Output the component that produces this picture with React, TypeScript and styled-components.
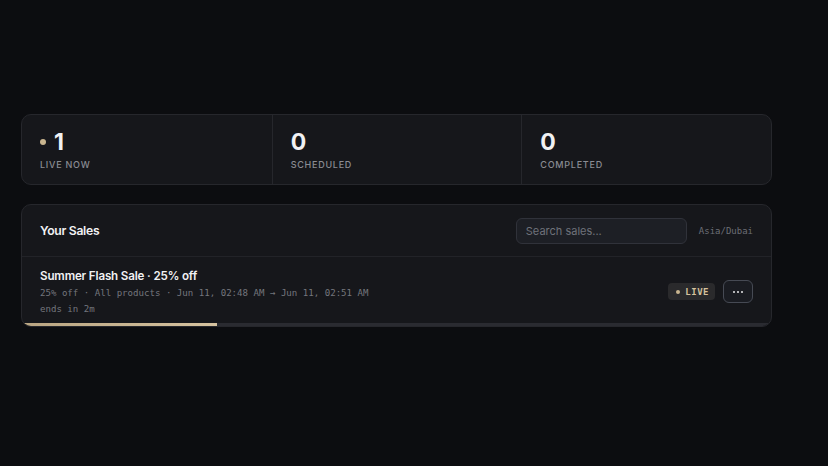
import styled, { createGlobalStyle } from "styled-components";

const Global = createGlobalStyle`
    html, body {
        margin: 0;
        padding: 0;
        background-color: #0c0d10;
    }
    * {
        box-sizing: border-box;
    }
`;

const Page = styled.div`
    min-height: 466px;
    padding: 114px 56px 40px 21px;
    display: flex;
    flex-direction: column;
    gap: 19px;
    font-family: Inter, "Noto Sans", sans-serif;
    color: #f1f1f3;
`;

const Card = styled.div`
    background-color: #16171b;
    border: 1px solid #26272c;
    border-radius: 10px;
    overflow: hidden;
`;

const Stats = styled(Card)`
    display: grid;
    grid-template-columns: repeat(3, 1fr);
    height: 71px;
`;

const Stat = styled.div`
    padding: 13px 18px 0;
    display: flex;
    flex-direction: column;
    gap: 3px;
    & + & {
        border-left: 1px solid #26272c;
    }
`;

const Value = styled.div`
    display: flex;
    align-items: center;
    gap: 8px;
    font-size: 23px;
    font-weight: 700;
    line-height: 28px;
`;

const Dot = styled.span<{ $size: number }>`
    width: ${(p) => p.$size}px;
    height: ${(p) => p.$size}px;
    border-radius: 50%;
    background-color: #c9b58f;
`;

const Label = styled.div`
    font-size: 9px;
    font-weight: 500;
    letter-spacing: 0.75px;
    color: #8a8c93;
    text-transform: uppercase;
`;

const Header = styled.div`
    height: 52px;
    padding: 0 18px;
    display: flex;
    align-items: center;
    gap: 12px;
    border-bottom: 1px solid #222328;
`;

const Title = styled.h2`
    margin: 0;
    flex: 1;
    font-size: 12.2px;
    font-weight: 600;
    letter-spacing: -0.3px;
`;

const Search = styled.input`
    width: 171px;
    height: 26px;
    padding: 0 9px;
    border-radius: 6px;
    border: 1px solid #30323a;
    background-color: #1d1f25;
    color: #ddd;
    font-family: Inter, sans-serif;
    font-size: 11px;
    &::placeholder {
        color: #6f727a;
    }
    &:focus {
        outline: none;
    }
`;

const Mono = styled.span`
    font-family: "DejaVu Sans Mono", "Liberation Mono", monospace;
    font-size: 9px;
    color: #6c6e75;
`;

const Row = styled.div`
    position: relative;
    height: 69px;
    padding: 12px 18px 0;
    display: flex;
    align-items: flex-start;
    gap: 8px;
`;

const Info = styled.div`
    flex: 1;
    display: flex;
    flex-direction: column;
    gap: 3px;
`;

const SaleName = styled.div`
    font-size: 11.6px;
    font-weight: 600;
    line-height: 15px;
    letter-spacing: -0.15px;
`;

const Meta = styled(Mono)`
    line-height: 13px;
    color: #74767d;
    font-size: 9.1px;
`;

const Actions = styled.div`
    display: flex;
    align-items: center;
    gap: 8px;
    margin-top: 11px;
`;

const Badge = styled.span`
    height: 17px;
    padding: 0 6px 0 8px;
    display: inline-flex;
    align-items: center;
    gap: 5px;
    border-radius: 4px;
    background-color: #2a2a2c;
    color: #d4c19d;
    font-family: "DejaVu Sans Mono", monospace;
    font-size: 9px;
    font-weight: 700;
    letter-spacing: 0.5px;
`;

const MoreButton = styled.button`
    width: 30px;
    height: 23px;
    display: flex;
    align-items: center;
    justify-content: center;
    gap: 2px;
    border-radius: 6px;
    border: 1px solid #464a54;
    background-color: #1a1c22;
    padding: 0;
    cursor: pointer;
`;

const MoreDot = styled.span`
    width: 2px;
    height: 2px;
    border-radius: 50%;
    background-color: #e6e6e8;
`;

const Track = styled.div`
    position: absolute;
    left: 0;
    right: 0;
    bottom: 0;
    height: 3px;
    background-color: #2a2b31;
`;

const Fill = styled.div`
    height: 100%;
    background: linear-gradient(90deg, #b9a582, #d6c3a0);
`;

const stats = [
    { value: 1, label: "Live now", live: true },
    { value: 0, label: "Scheduled", live: false },
    { value: 0, label: "Completed", live: false },
];

function App() {
    const progress = 26;

    return (
        <Page>
            <Global />
            <Stats>
                {stats.map((s) => (
                    <Stat key={s.label}>
                        <Value>
                            {s.live && <Dot $size={6} />}
                            {s.value}
                        </Value>
                        <Label>{s.label}</Label>
                    </Stat>
                ))}
            </Stats>
            <Card>
                <Header>
                    <Title>Your Sales</Title>
                    <Search placeholder={"Search sales..."} />
                    <Mono>Asia/Dubai</Mono>
                </Header>
                <Row>
                    <Info>
                        <SaleName>Summer Flash Sale · 25% off</SaleName>
                        <Meta>25% off · All products · Jun 11, 02:48 AM → Jun 11, 02:51 AM</Meta>
                        <Meta>ends in 2m</Meta>
                    </Info>
                    <Actions>
                        <Badge>
                            <Dot $size={4} />
                            LIVE
                        </Badge>
                        <MoreButton>
                            <MoreDot />
                            <MoreDot />
                            <MoreDot />
                        </MoreButton>
                    </Actions>
                    <Track>
                        <Fill style={{ width: `${progress}%` }} />
                    </Track>
                </Row>
            </Card>
        </Page>
    );
}

export default App;
